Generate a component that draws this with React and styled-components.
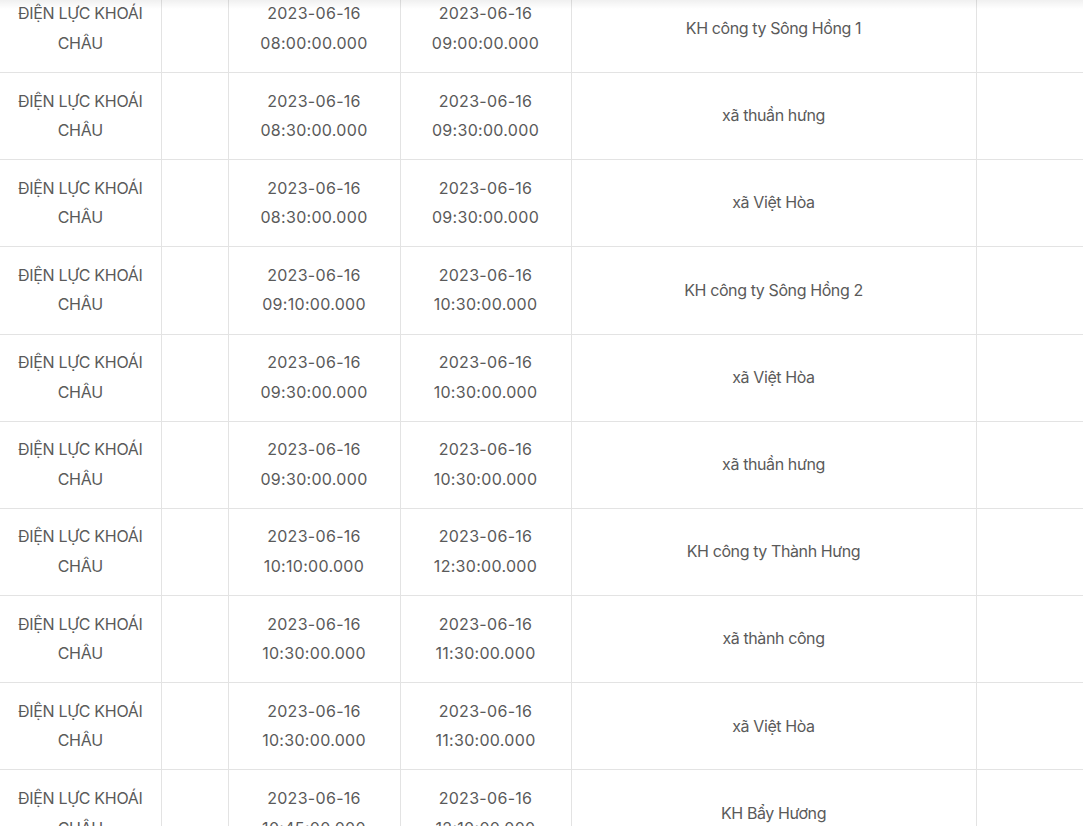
import React from "react";
import styled, { createGlobalStyle } from "styled-components";

const Global = createGlobalStyle`
  html, body { margin: 0; padding: 0; background: #fff; overflow: hidden; }
  body { font-family: Inter, "Noto Sans", "Liberation Sans", sans-serif; }
`;

const Page = styled.div`
  position: relative;
  width: 1083px;
  height: 826px;
  overflow: hidden;
`;

const TopShadow = styled.div`
  position: absolute;
  left: 0;
  right: 0;
  top: 0;
  height: 9px;
  background: linear-gradient(to bottom, rgba(0, 0, 0, 0.06), rgba(0, 0, 0, 0));
  pointer-events: none;
`;

const Table = styled.table`
  width: 1083px;
  margin-top: -15.25px;
  border-collapse: collapse;
  table-layout: fixed;
`;

const Cell = styled.td`
  border: 1px solid #e3e3e3;
  padding: 13.6px 4px;
  text-align: center;
  vertical-align: middle;
  font-size: 16px;
  line-height: 29.5px;
  color: #5a5a5a;
  font-weight: 400;
  letter-spacing: -0.4px;
  &:first-child { border-left: none; }
  &:last-child { border-right: none; }
`;

const Line = styled.div`
  white-space: nowrap;
  letter-spacing: ${(p) => (p.$digits ? "0.3px" : "-0.3px")};
`;

const cols = [161, 67, 172, 171, 405, 107];

const rows = [
  ["08:00", "09:00", "KH công ty Sông Hồng 1"],
  ["08:30", "09:30", "xã thuần hưng"],
  ["08:30", "09:30", "xã Việt Hòa"],
  ["09:10", "10:30", "KH công ty Sông Hồng 2"],
  ["09:30", "10:30", "xã Việt Hòa"],
  ["09:30", "10:30", "xã thuần hưng"],
  ["10:10", "12:30", "KH công ty Thành Hưng"],
  ["10:30", "11:30", "xã thành công"],
  ["10:30", "11:30", "xã Việt Hòa"],
  ["10:45", "12:10", "KH Bẩy Hương"],
];

const DateTime = ({ t }) => (
  <>
    <Line $digits>2023-06-16</Line>
    <Line $digits>{t}:00.000</Line>
  </>
);

export default function App() {
  return (
    <Page>
      <Global />
      <Table>
        <colgroup>
          {cols.map((w, i) => (
            <col key={i} style={{ width: w }} />
          ))}
        </colgroup>
        <tbody>
          {rows.map((r, i) => (
            <tr key={i}>
              <Cell>
                <Line>ĐIỆN LỰC KHOÁI</Line>
                <Line>CHÂU</Line>
              </Cell>
              <Cell />
              <Cell>
                <DateTime t={r[0]} />
              </Cell>
              <Cell>
                <DateTime t={r[1]} />
              </Cell>
              <Cell>{r[2]}</Cell>
              <Cell />
            </tr>
          ))}
        </tbody>
      </Table>
      <TopShadow />
    </Page>
  );
}
